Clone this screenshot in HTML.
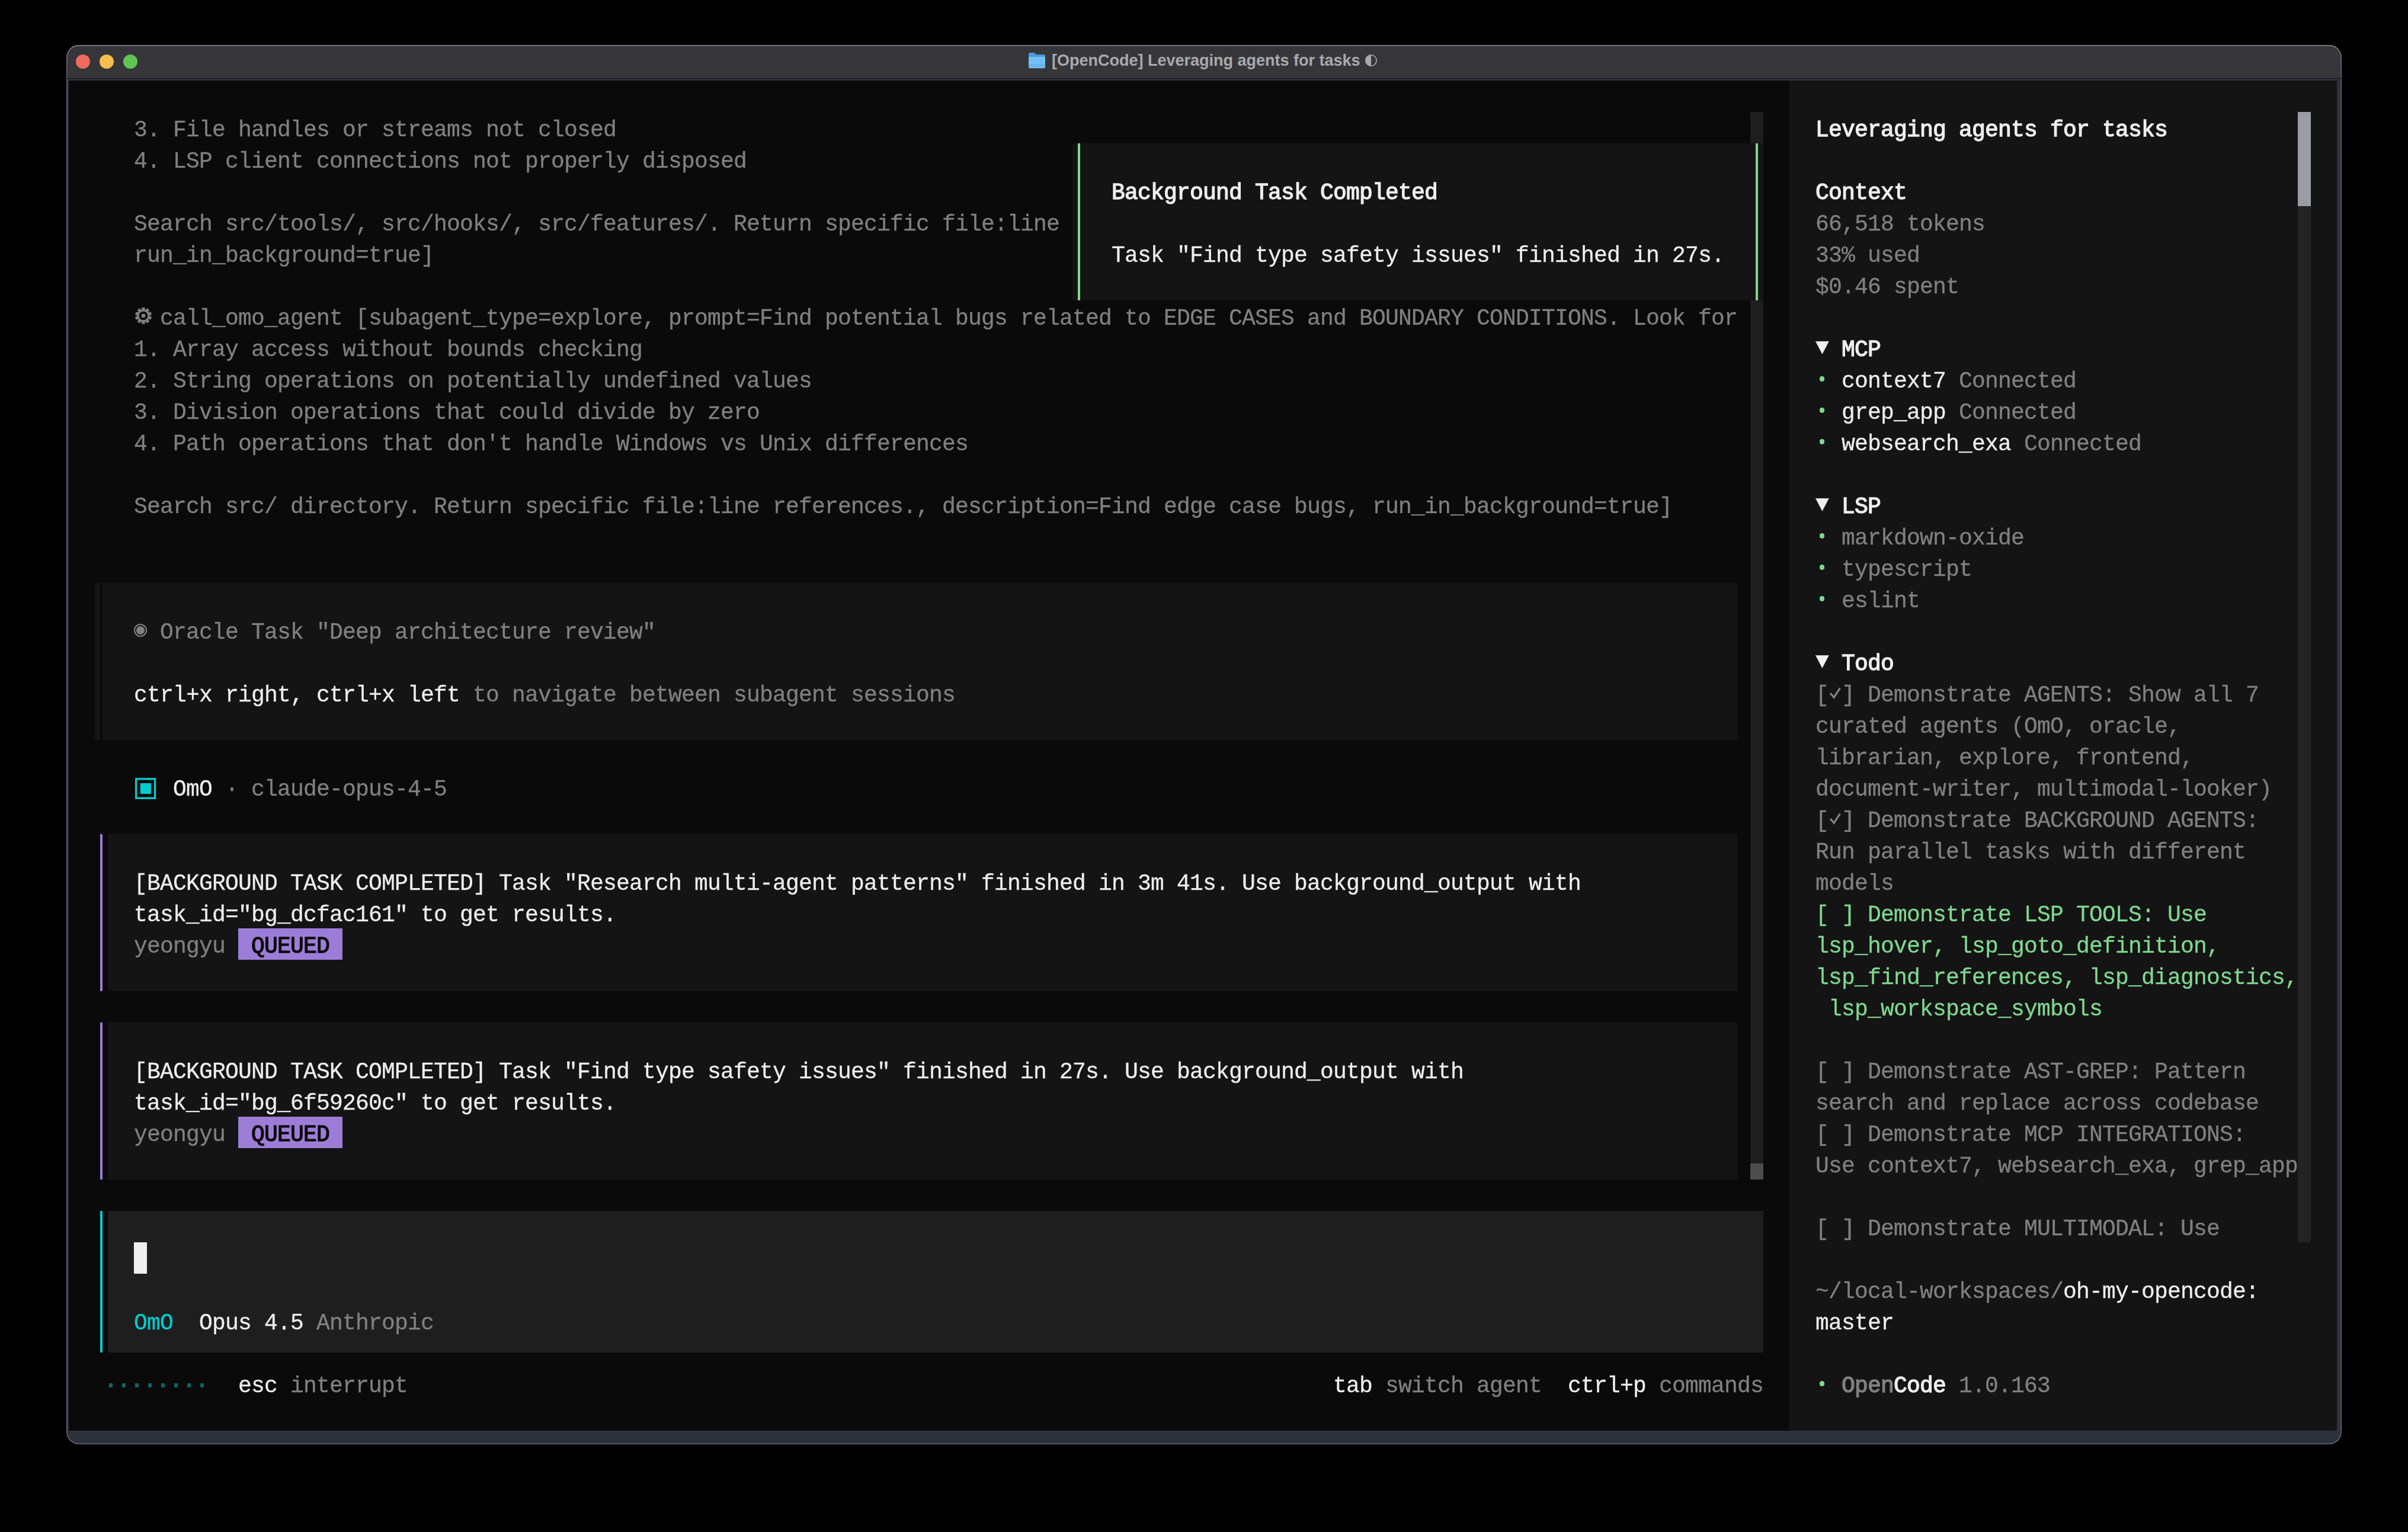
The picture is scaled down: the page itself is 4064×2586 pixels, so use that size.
<!DOCTYPE html>
<html><head><meta charset="utf-8"><style>
html,body{margin:0;padding:0;background:#000;width:4064px;height:2586px;overflow:hidden}
#win{position:absolute;left:112px;top:76px;width:3840px;height:2362px;border-radius:21px;background:#2d323d;box-shadow:inset 0 0 0 1.6px #61656f;overflow:hidden}
#tb{position:absolute;left:0;top:0;width:3840px;height:56px;border-radius:21px 21px 0 0;background:#36363a;box-shadow:inset 0 1.6px 0 #8a8b8e, inset 1.6px 0 0 #66676b, inset -1.6px 0 0 #66676b}
#tbline{position:absolute;left:0;top:56px;width:3840px;height:1.3px;background:#0c0c0c}
#c{position:absolute;left:116px;top:136px;width:3828px;height:2279px;background:#0a0a0a}
#L{will-change:transform} #L div{position:absolute}
.t{position:absolute;white-space:pre;font-family:"Liberation Mono",monospace;font-size:38px;letter-spacing:-0.8037px;line-height:53px;height:53px;-webkit-text-stroke:0.3px currentColor}
.dot{position:absolute;width:24px;height:24px;border-radius:50%}
#title{position:absolute;left:1775px;top:85px;font-family:"Liberation Sans",sans-serif;font-weight:bold;font-size:27px;color:#a9a9ad;white-space:pre;line-height:34px}
</style></head><body>
<div id="win"><div id="tb"></div><div id="tbline"></div></div>
<div class="dot" style="left:128px;top:92px;background:#ee6a5f"></div>
<div class="dot" style="left:168px;top:92px;background:#f5be4f"></div>
<div class="dot" style="left:208px;top:92px;background:#61c554"></div>
<svg style="position:absolute;left:1736px;top:88.8px" width="28" height="27" viewBox="0 0 28 27"><path d="M0 2 Q0 0 2 0 L9.5 0 L12.5 3 L26 3 Q28 3 28 5 L28 8 L0 8 Z" fill="#4b9de0"/><rect x="0" y="5.2" width="28" height="1.4" fill="#3d86d0"/><path d="M0 8 Q0 6.5 1.5 6.5 L26.5 6.5 Q28 6.5 28 8 L28 24.5 Q28 26.3 26 26.3 L2 26.3 Q0 26.3 0 24.5 Z" fill="#72c0f2"/><rect x="0" y="19.7" width="28" height="1" fill="#5aa9e2"/><rect x="0" y="22.4" width="28" height="1" fill="#5aa9e2"/></svg>
<div id="title">[OpenCode] Leveraging agents for tasks</div>
<svg style="position:absolute;left:2302.5px;top:91.3px" width="22" height="22" viewBox="0 0 22 22"><circle cx="11" cy="11" r="9.2" fill="none" stroke="#a9a9ad" stroke-width="1.6"/><path d="M11 1.5 A9.5 9.5 0 0 0 11 20.5 Z" fill="#a9a9ad"/></svg>
<div id="c"></div>
<div id="L">
<div style="left:3020px;top:136px;width:924px;height:2279px;background:#141414;"></div>
<div style="left:2954px;top:189px;width:22px;height:1775px;background:#1e1e1e;"></div>
<div style="left:2954px;top:1964px;width:22px;height:27px;background:#4d4d4d;"></div>
<div style="left:3878px;top:189px;width:22px;height:1908px;background:#232323;"></div>
<div style="left:3878px;top:189px;width:22px;height:159px;background:#9a9ea3;"></div>
<div style="left:1810px;top:242px;width:1166px;height:265px;background:#141414;"></div>
<div style="left:1818.6px;top:242px;width:4.5px;height:265px;background:#7fd88f;"></div>
<div style="left:2962.8px;top:242px;width:4.5px;height:265px;background:#7fd88f;"></div>
<div style="left:160px;top:984px;width:2772px;height:265px;background:#141414;"></div>
<div style="left:169px;top:984px;width:4px;height:265px;background:#0a0a0a;"></div>
<div style="left:182px;top:1408px;width:2750px;height:265px;background:#141414;"></div>
<div style="left:168.6px;top:1408px;width:4.6px;height:265px;background:#9d7cd8;"></div>
<div style="left:402px;top:1567px;width:176px;height:53px;background:#9d7cd8;"></div>
<div style="left:182px;top:1726px;width:2750px;height:265px;background:#141414;"></div>
<div style="left:168.6px;top:1726px;width:4.6px;height:265px;background:#9d7cd8;"></div>
<div style="left:402px;top:1885px;width:176px;height:53px;background:#9d7cd8;"></div>
<div style="left:182px;top:2044px;width:2794px;height:239px;background:#1e1e1e;"></div>
<div style="left:168.8px;top:2044px;width:4.4px;height:239px;background:#00ced1;"></div>
<div style="left:226px;top:2097px;width:22px;height:53px;background:#eeeeee;"></div>
<div style="left:184px;top:2335px;width:6px;height:7px;background:#0a6466;"></div>
<div style="left:206px;top:2335px;width:6px;height:7px;background:#0a6466;"></div>
<div style="left:228px;top:2335px;width:6px;height:7px;background:#0a6466;"></div>
<div style="left:250px;top:2335px;width:6px;height:7px;background:#0a6466;"></div>
<div style="left:272px;top:2335px;width:6px;height:7px;background:#0a6466;"></div>
<div style="left:294px;top:2335px;width:6px;height:7px;background:#0a6466;"></div>
<div style="left:316px;top:2335px;width:6px;height:7px;background:#0a6466;"></div>
<div style="left:338px;top:2335px;width:6px;height:7px;background:#0a6466;"></div>
<div class="t" style="left:226px;top:193px"><span style="color:#808080">3. File handles or streams not closed</span></div>
<div class="t" style="left:226px;top:246px"><span style="color:#808080">4. LSP client connections not properly disposed</span></div>
<div class="t" style="left:226px;top:352px"><span style="color:#808080">Search src/tools/, src/hooks/, src/features/. Return specific file:line</span></div>
<div class="t" style="left:226px;top:405px"><span style="color:#808080">run_in_background=true]</span></div>
<div class="t" style="left:270px;top:511px"><span style="color:#808080">call_omo_agent [subagent_type=explore, prompt=Find potential bugs related to EDGE CASES and BOUNDARY CONDITIONS. Look for</span></div>
<div class="t" style="left:226px;top:564px"><span style="color:#808080">1. Array access without bounds checking</span></div>
<div class="t" style="left:226px;top:617px"><span style="color:#808080">2. String operations on potentially undefined values</span></div>
<div class="t" style="left:226px;top:670px"><span style="color:#808080">3. Division operations that could divide by zero</span></div>
<div class="t" style="left:226px;top:723px"><span style="color:#808080">4. Path operations that don&#x27;t handle Windows vs Unix differences</span></div>
<div class="t" style="left:226px;top:829px"><span style="color:#808080">Search src/ directory. Return specific file:line references., description=Find edge case bugs, run_in_background=true]</span></div>
<div class="t" style="left:1876px;top:299px"><span style="color:#eeeeee;-webkit-text-stroke:1.3px currentColor">Background Task Completed</span></div>
<div class="t" style="left:1876px;top:405px"><span style="color:#eeeeee">Task &quot;Find type safety issues&quot; finished in 27s.</span></div>
<div class="t" style="left:270px;top:1041px"><span style="color:#808080">Oracle Task &quot;Deep architecture review&quot;</span></div>
<div class="t" style="left:226px;top:1147px"><span style="color:#eeeeee">ctrl+x right, ctrl+x left</span><span style="color:#808080"> to navigate between subagent sessions</span></div>
<div class="t" style="left:292px;top:1306px"><span style="color:#eeeeee">OmO</span><span style="color:#808080"> · </span><span style="color:#808080">claude-opus-4-5</span></div>
<div class="t" style="left:226px;top:1465px"><span style="color:#eeeeee">[BACKGROUND TASK COMPLETED] Task &quot;Research multi-agent patterns&quot; finished in 3m 41s. Use background_output with</span></div>
<div class="t" style="left:226px;top:1518px"><span style="color:#eeeeee">task_id=&quot;bg_dcfac161&quot; to get results.</span></div>
<div class="t" style="left:226px;top:1571px"><span style="color:#808080">yeongyu</span></div>
<div class="t" style="left:402px;top:1571px"><span style="color:#0a0a0a;-webkit-text-stroke:1.3px currentColor"> QUEUED </span></div>
<div class="t" style="left:226px;top:1783px"><span style="color:#eeeeee">[BACKGROUND TASK COMPLETED] Task &quot;Find type safety issues&quot; finished in 27s. Use background_output with</span></div>
<div class="t" style="left:226px;top:1836px"><span style="color:#eeeeee">task_id=&quot;bg_6f59260c&quot; to get results.</span></div>
<div class="t" style="left:226px;top:1889px"><span style="color:#808080">yeongyu</span></div>
<div class="t" style="left:402px;top:1889px"><span style="color:#0a0a0a;-webkit-text-stroke:1.3px currentColor"> QUEUED </span></div>
<div class="t" style="left:226px;top:2207px"><span style="color:#00ced1">OmO</span><span style="color:#eeeeee">  Opus 4.5</span><span style="color:#808080"> Anthropic</span></div>
<div class="t" style="left:402px;top:2313px"><span style="color:#eeeeee">esc</span><span style="color:#808080"> interrupt</span></div>
<div class="t" style="left:2250px;top:2313px"><span style="color:#eeeeee">tab</span><span style="color:#808080"> switch agent</span><span style="color:#eeeeee">  ctrl+p</span><span style="color:#808080"> commands</span></div>
<div class="t" style="left:3064px;top:193px"><span style="color:#eeeeee;-webkit-text-stroke:1.3px currentColor">Leveraging agents for tasks</span></div>
<div class="t" style="left:3064px;top:299px"><span style="color:#eeeeee;-webkit-text-stroke:1.3px currentColor">Context</span></div>
<div class="t" style="left:3064px;top:352px"><span style="color:#808080">66,518 tokens</span></div>
<div class="t" style="left:3064px;top:405px"><span style="color:#808080">33% used</span></div>
<div class="t" style="left:3064px;top:458px"><span style="color:#808080">$0.46 spent</span></div>
<div class="t" style="left:3064px;top:564px"><span style="color:#eeeeee;position:relative;top:-4px">▼</span><span style="color:#eeeeee"> </span><span style="color:#eeeeee;-webkit-text-stroke:1.3px currentColor">MCP</span></div>
<div class="t" style="left:3064px;top:617px"><span style="color:#7fd88f">  </span><span style="color:#eeeeee">context7</span><span style="color:#808080"> Connected</span></div>
<div class="t" style="left:3064px;top:670px"><span style="color:#7fd88f">  </span><span style="color:#eeeeee">grep_app</span><span style="color:#808080"> Connected</span></div>
<div class="t" style="left:3064px;top:723px"><span style="color:#7fd88f">  </span><span style="color:#eeeeee">websearch_exa</span><span style="color:#808080"> Connected</span></div>
<div class="t" style="left:3064px;top:829px"><span style="color:#eeeeee;position:relative;top:-4px">▼</span><span style="color:#eeeeee"> </span><span style="color:#eeeeee;-webkit-text-stroke:1.3px currentColor">LSP</span></div>
<div class="t" style="left:3064px;top:882px"><span style="color:#7fd88f">  </span><span style="color:#808080">markdown-oxide</span></div>
<div class="t" style="left:3064px;top:935px"><span style="color:#7fd88f">  </span><span style="color:#808080">typescript</span></div>
<div class="t" style="left:3064px;top:988px"><span style="color:#7fd88f">  </span><span style="color:#808080">eslint</span></div>
<div class="t" style="left:3064px;top:1094px"><span style="color:#eeeeee;position:relative;top:-4px">▼</span><span style="color:#eeeeee"> </span><span style="color:#eeeeee;-webkit-text-stroke:1.3px currentColor">Todo</span></div>
<div class="t" style="left:3064px;top:1147px"><span style="color:#808080">[ ] Demonstrate AGENTS: Show all 7</span></div>
<div class="t" style="left:3064px;top:1200px"><span style="color:#808080">curated agents (OmO, oracle,</span></div>
<div class="t" style="left:3064px;top:1253px"><span style="color:#808080">librarian, explore, frontend,</span></div>
<div class="t" style="left:3064px;top:1306px"><span style="color:#808080">document-writer, multimodal-looker)</span></div>
<div class="t" style="left:3064px;top:1359px"><span style="color:#808080">[ ] Demonstrate BACKGROUND AGENTS:</span></div>
<div class="t" style="left:3064px;top:1412px"><span style="color:#808080">Run parallel tasks with different</span></div>
<div class="t" style="left:3064px;top:1465px"><span style="color:#808080">models</span></div>
<div class="t" style="left:3064px;top:1518px"><span style="color:#7fd88f">[ ] Demonstrate LSP TOOLS: Use</span></div>
<div class="t" style="left:3064px;top:1571px"><span style="color:#7fd88f">lsp_hover, lsp_goto_definition,</span></div>
<div class="t" style="left:3064px;top:1624px"><span style="color:#7fd88f">lsp_find_references, lsp_diagnostics,</span></div>
<div class="t" style="left:3064px;top:1677px"><span style="color:#7fd88f"> lsp_workspace_symbols</span></div>
<div class="t" style="left:3064px;top:1783px"><span style="color:#808080">[ ] Demonstrate AST-GREP: Pattern</span></div>
<div class="t" style="left:3064px;top:1836px"><span style="color:#808080">search and replace across codebase</span></div>
<div class="t" style="left:3064px;top:1889px"><span style="color:#808080">[ ] Demonstrate MCP INTEGRATIONS:</span></div>
<div class="t" style="left:3064px;top:1942px"><span style="color:#808080">Use context7, websearch_exa, grep_app</span></div>
<div class="t" style="left:3064px;top:2048px"><span style="color:#808080">[ ] Demonstrate MULTIMODAL: Use</span></div>
<div class="t" style="left:3064px;top:2154px"><span style="color:#808080">~/local-workspaces/</span><span style="color:#eeeeee">oh-my-opencode:</span></div>
<div class="t" style="left:3064px;top:2207px"><span style="color:#eeeeee">master</span></div>
<div class="t" style="left:3064px;top:2313px"><span style="color:#7fd88f">  </span><span style="color:#808080;-webkit-text-stroke:1.3px currentColor">Open</span><span style="color:#eeeeee;-webkit-text-stroke:1.3px currentColor">Code</span><span style="color:#808080"> 1.0.163</span></div>
<svg style="position:absolute;left:226.2px;top:517.4px" width="32" height="32" viewBox="-16 -16 32 32"><circle cx="0" cy="0" r="10.6" fill="#808080"/><rect x="-2.7" y="-13.9" width="5.4" height="6" fill="#808080" transform="rotate(0)"/><rect x="-2.7" y="-13.9" width="5.4" height="6" fill="#808080" transform="rotate(36)"/><rect x="-2.7" y="-13.9" width="5.4" height="6" fill="#808080" transform="rotate(72)"/><rect x="-2.7" y="-13.9" width="5.4" height="6" fill="#808080" transform="rotate(108)"/><rect x="-2.7" y="-13.9" width="5.4" height="6" fill="#808080" transform="rotate(144)"/><rect x="-2.7" y="-13.9" width="5.4" height="6" fill="#808080" transform="rotate(180)"/><rect x="-2.7" y="-13.9" width="5.4" height="6" fill="#808080" transform="rotate(216)"/><rect x="-2.7" y="-13.9" width="5.4" height="6" fill="#808080" transform="rotate(252)"/><rect x="-2.7" y="-13.9" width="5.4" height="6" fill="#808080" transform="rotate(288)"/><rect x="-2.7" y="-13.9" width="5.4" height="6" fill="#808080" transform="rotate(324)"/><circle cx="0" cy="0" r="7.3" fill="#0a0a0a"/><circle cx="0" cy="0" r="3.5" fill="#808080"/></svg>
<svg style="position:absolute;left:224.9px;top:1052px" width="24" height="24" viewBox="0 0 24 24"><circle cx="12" cy="12" r="10" fill="none" stroke="#808080" stroke-width="2.1"/><circle cx="12" cy="12" r="7.1" fill="#808080"/></svg>
<svg style="position:absolute;left:228px;top:1313px" width="36" height="36" viewBox="0 0 36 36"><rect x="1.65" y="1.85" width="31.9" height="32.4" fill="none" stroke="#00ced1" stroke-width="3.3"/><rect x="8.8" y="9" width="18.1" height="18.1" fill="#00ced1"/></svg>
<svg style="position:absolute;left:3086px;top:1143px" width="22" height="53" viewBox="0 0 22 53"><polyline points="3,27.2 9.2,34.2 19.4,18.3" fill="none" stroke="#808080" stroke-width="3.3"/></svg>
<svg style="position:absolute;left:3086px;top:1355px" width="22" height="53" viewBox="0 0 22 53"><polyline points="3,27.2 9.2,34.2 19.4,18.3" fill="none" stroke="#808080" stroke-width="3.3"/></svg>
<div style="position:absolute;left:3070.6px;top:635.2px;width:8.8px;height:8.8px;border-radius:50%;background:#7fd88f"></div>
<div style="position:absolute;left:3070.6px;top:688.2px;width:8.8px;height:8.8px;border-radius:50%;background:#7fd88f"></div>
<div style="position:absolute;left:3070.6px;top:741.2px;width:8.8px;height:8.8px;border-radius:50%;background:#7fd88f"></div>
<div style="position:absolute;left:3070.6px;top:900.2px;width:8.8px;height:8.8px;border-radius:50%;background:#7fd88f"></div>
<div style="position:absolute;left:3070.6px;top:953.2px;width:8.8px;height:8.8px;border-radius:50%;background:#7fd88f"></div>
<div style="position:absolute;left:3070.6px;top:1006.2px;width:8.8px;height:8.8px;border-radius:50%;background:#7fd88f"></div>
<div style="position:absolute;left:3070.6px;top:2331.2px;width:8.8px;height:8.8px;border-radius:50%;background:#7fd88f"></div>
</div>
</body></html>
